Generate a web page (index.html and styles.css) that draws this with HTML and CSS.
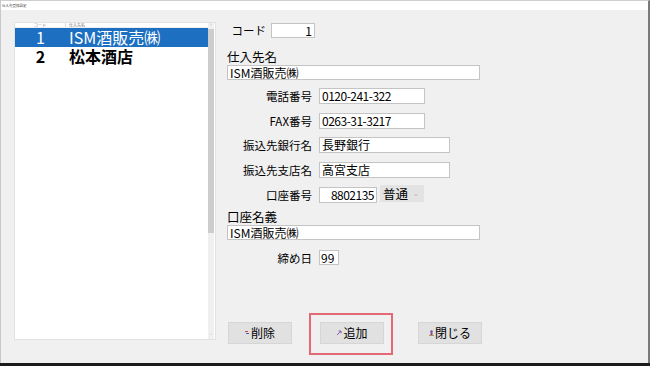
FILE: index.html
```html
<!DOCTYPE html>
<html lang="ja">
<head>
    <meta charset="UTF-8">
    <title>仕入先登録設定</title>
    <link rel="stylesheet" href="styles.css">
</head>
<body>
    <div class="window">
        <div class="titlebar">仕入先登録設定</div>
        <div class="main">
            <div class="list">
                <div class="list-body">
                    <div class="list-head">
                        <span class="col-code">コード</span>
                        <span class="col-name">仕入先名</span>
                    </div>
                    <div class="list-row selected">
                        <span class="col-code">1</span>
                        <span class="col-name">ISM酒販売㈱</span>
                    </div>
                    <div class="list-row">
                        <span class="col-code">2</span>
                        <span class="col-name">松本酒店</span>
                    </div>
                </div>
                <div class="scrollbar">
                    <span class="arrow">&#708;</span>
                    <div class="thumb"></div>
                    <div class="track"></div>
                    <span class="arrow">&#709;</span>
                </div>
            </div>

            <div class="form">
                <div class="code-row">
                    <label class="code-label">コード</label>
                    <div class="field w-code right">1</div>
                </div>

                <div class="caption cap-name">仕入先名</div>
                <div class="field w-full">ISM酒販売㈱</div>

                <div class="grid grid-bank">
                    <label>電話番号</label>
                    <div class="field w-tel num">0120-241-322</div>
                    <label>FAX番号</label>
                    <div class="field w-tel num">0263-31-3217</div>
                    <label>振込先銀行名</label>
                    <div class="field w-bank">長野銀行</div>
                    <label>振込先支店名</label>
                    <div class="field w-bank">高宮支店</div>
                    <label>口座番号</label>
                    <div class="pair">
                        <div class="field w-acct right num">8802135</div>
                        <div class="select">普通<span class="caret">&#8964;</span></div>
                    </div>
                </div>

                <div class="caption cap-holder">口座名義</div>
                <div class="field w-full">ISM酒販売㈱</div>

                <div class="grid grid-close">
                    <label>締め日</label>
                    <div class="field w-day">99</div>
                </div>

                <div class="buttons">
                    <button class="btn">
                        <svg class="ico" width="5" height="5" viewBox="0 0 5 5"><rect x="0" y="1" width="3" height="1" fill="#d04040"/><rect x="1" y="3" width="3" height="1" fill="#4060c0"/></svg>削除
                    </button>
                    <div class="highlight">
                        <button class="btn">
                            <svg class="ico" width="6" height="6" viewBox="0 0 6 6"><path d="M1 5 L5 1 M2.5 1 H5 V3.5" stroke="#8a5aa8" stroke-width="1" fill="none"/></svg>追加
                        </button>
                    </div>
                    <button class="btn">
                        <svg class="ico" width="5" height="6" viewBox="0 0 5 6"><circle cx="2.5" cy="1.5" r="1.2" fill="#7a4a9a"/><rect x="1.5" y="2.5" width="2" height="2.5" fill="#7a4a9a"/><rect x="0" y="5" width="5" height="1" fill="#c08a50"/></svg>閉じる
                    </button>
                </div>
            </div>
        </div>
    </div>
</body>
</html>
```

FILE: styles.css
```css
* {
    margin: 0;
    padding: 0;
    box-sizing: border-box;
}

html, body {
    background: #1c1c1c;
    height: 366px;
    overflow: hidden;
}

body {
    font-family: "Noto Sans CJK JP", "Noto Sans", sans-serif;
    font-size: 12px;
    color: #000;
}

.window {
    width: 650px;
    height: 363px;
    background: #f0f0f0;
    border-top: 1px solid #cfcfcf;
    border-left: 1px solid #c8c8c8;
    border-right: 2px solid #7a7a7a;
    display: flex;
    flex-direction: column;
}

.titlebar {
    height: 9px;
    background: #fff;
    font-size: 3.5px;
    line-height: 9px;
    padding-left: 1px;
    color: #444;
}

.main {
    flex: 1;
    display: flex;
    padding: 12px 0 0 13px;
}

/* list */

.list {
    width: 202px;
    height: 318px;
    background: #fff;
    border: 1px solid #e2e2e2;
    display: flex;
}

.list-body {
    flex: 1;
}

.list-head {
    display: flex;
    height: 5px;
    font-size: 4px;
    line-height: 4px;
    color: #777;
    border-bottom: 1px solid #eee;
    overflow: hidden;
}

.list-head span {
    height: 4px;
    overflow: hidden;
}

.list-head .col-code {
    border-right: 1px solid #ddd;
}

.col-code {
    width: 51px;
    text-align: center;
    flex: none;
}

.col-name {
    padding-left: 3px;
}

.list-row {
    display: flex;
    height: 19px;
    font-size: 16px;
    line-height: 19px;
    font-weight: bold;
}

.list-row.selected {
    background: #1c6fc1;
    color: #fff;
    font-weight: normal;
}

.scrollbar {
    width: 6px;
    display: flex;
    flex-direction: column;
    background: #f0f0f0;
    margin-right: 1px;
}

.scrollbar .arrow {
    height: 6px;
    font-size: 5px;
    line-height: 6px;
    text-align: center;
    color: #888;
}

.thumb {
    height: 204px;
    background: #cdcdcd;
}

.track {
    flex: 1;
}

/* form */

.form {
    margin-left: 11px;
    width: 260px;
}

.field {
    height: 15px;
    background: #fff;
    border: 1px solid #c4c4c4;
    font-size: 12px;
    line-height: 13px;
    padding: 0 2px;
    white-space: nowrap;
}

.field.right {
    text-align: right;
}

.field.num {
    letter-spacing: -0.5px;
}

.code-row {
    display: flex;
    align-items: center;
}

.code-label {
    width: 44px;
    text-align: right;
    padding-right: 5px;
    font-size: 11.5px;
}

.w-code { width: 44px; }
.w-full { width: 253px; }
.w-tel { width: 106px; }
.w-bank { width: 131px; }
.w-acct { width: 58px; }
.w-day { width: 20px; }

.caption {
    line-height: 15px;
    font-size: 12.5px;
}

.cap-name {
    margin: 11px 0 1px;
}

.cap-holder {
    margin: 6px 0 1px;
}

.grid {
    display: grid;
    grid-template-columns: 92px auto;
    row-gap: 8.7px;
    align-items: center;
}

.grid label {
    text-align: right;
    padding-right: 7px;
    line-height: 16px;
    font-size: 11.5px;
}

.grid .field {
    height: 16px;
    line-height: 14px;
}

.grid-bank {
    margin-top: 8px;
}

.grid-close {
    margin-top: 10px;
}

.grid-close .field {
    height: 15px;
    line-height: 13px;
    padding: 0 1px;
}

.pair {
    display: flex;
    align-items: center;
    gap: 3px;
}

.select {
    width: 44px;
    height: 17px;
    background: #e3e3e3;
    border: 1px solid #e3e3e3;
    font-size: 12.5px;
    line-height: 15px;
    padding-left: 2px;
    display: flex;
    justify-content: space-between;
    margin-top: -2px;
}

.caret {
    font-size: 7px;
    color: #aaa;
    padding-right: 4px;
}

/* buttons */

.buttons {
    display: flex;
    align-items: flex-start;
    margin-top: 47px;
    padding-left: 1px;
}

.btn {
    width: 64px;
    height: 22px;
    background: #e1e1e1;
    border: 1px solid #d6d6d6;
    font-family: inherit;
    font-size: 12px;
    color: #000;
    display: flex;
    align-items: center;
    justify-content: center;
    gap: 1px;
}

.buttons > .btn {
    margin-top: 9px;
}

.ico {
    flex: none;
}

.highlight {
    margin-left: 17px;
    margin-right: 25px;
    border: 2px solid #e36a74;
    padding: 7px 7px 9px 9px;
}
```
